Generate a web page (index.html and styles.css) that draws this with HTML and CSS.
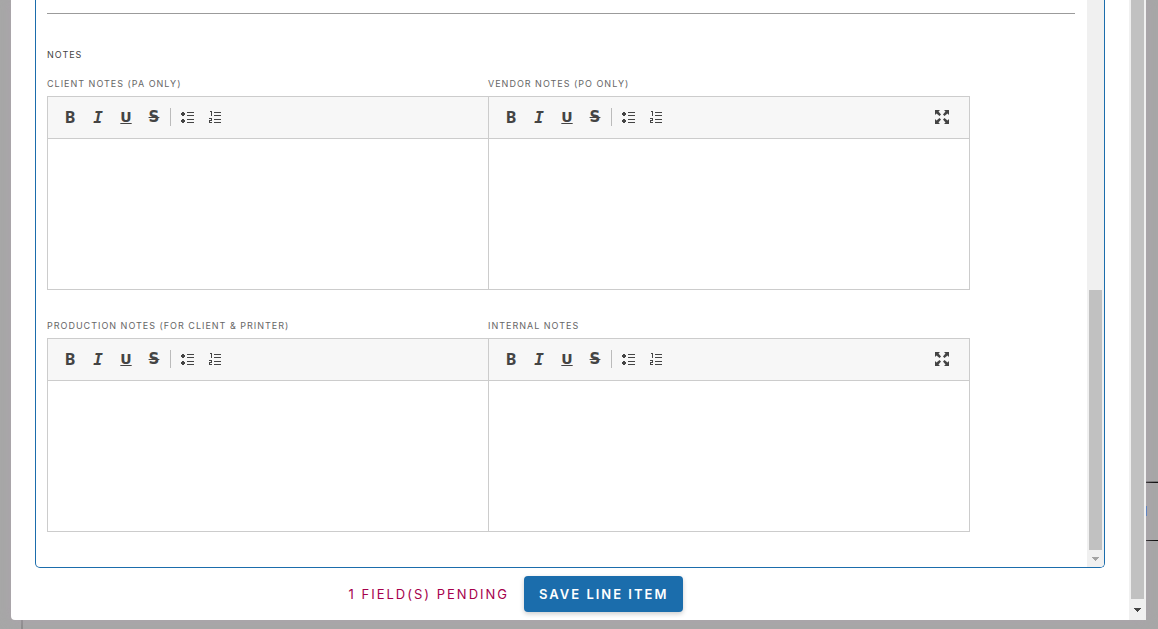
FILE: index.html
```html
<!DOCTYPE html>
<html lang="en">

<head>
    <meta charset="UTF-8">
    <title>Line Item</title>
    <link rel="stylesheet" href="styles.css">
</head>

<body>
    <div class="page-behind">
        <div class="behind-row"></div>
        <div class="behind-link"></div>
        <div class="behind-edge"></div>
    </div>

    <div class="modal">
        <div class="modal-main">
            <div class="panel">
                <form class="panel-content" id="line-item">
                    <hr class="divider">
                    <h2 class="section-title">Notes</h2>
                    <div class="notes-grid"></div>
                </form>
                <div class="scrollbar">
                    <div class="thumb panel-thumb"></div>
                    <div class="scroll-arrow light">
                        <svg width="7" height="4" viewBox="0 0 7 4" shape-rendering="crispEdges"><path d="M0 0h7v1H6v1H5v1H4v1H3V3H2V2H1V1H0z"/></svg>
                    </div>
                </div>
            </div>
            <div class="modal-footer">
                <span class="pending">1 Field(s) Pending</span>
                <button type="submit" form="line-item" class="save-button">Save Line Item</button>
            </div>
        </div>
        <div class="scrollbar">
            <div class="thumb"></div>
            <div class="scroll-arrow">
                <svg width="7" height="4" viewBox="0 0 7 4" shape-rendering="crispEdges"><path d="M0 0h7v1H6v1H5v1H4v1H3V3H2V2H1V1H0z"/></svg>
            </div>
        </div>
    </div>

    <script src="script.js"></script>
</body>

</html>
```

FILE: styles.css
```css
* {
    box-sizing: border-box;
}

body {
    font-family: Inter, "Liberation Sans", sans-serif;
    background-color: #a7a7a7;
    margin: 0;
    height: 100vh;
    padding: 0 12px 9px 11px;
    overflow: hidden;
}

/* dimmed page under the modal */
.page-behind {
    position: absolute;
    inset: 0;
}

.behind-row {
    position: absolute;
    right: 0;
    top: 482px;
    width: 40px;
    height: 59px;
    border-top: 1px solid #111;
    border-bottom: 1px solid #111;
    box-shadow: 0 -1px 0 #777;
}

.behind-link {
    position: absolute;
    right: 11px;
    top: 506px;
    width: 4px;
    height: 10px;
    background-color: #3f78c8;
}

.behind-edge {
    position: absolute;
    left: 21px;
    bottom: 0;
    width: 2px;
    height: 40px;
    background-color: #8c8c8c;
}

.modal {
    position: relative;
    display: flex;
    height: 100%;
    background-color: #fff;
    border-radius: 0 0 0 4px;
    box-shadow: 0 0 12px rgba(176, 160, 176, 0.6);
}

.modal-main {
    flex: 1;
    display: flex;
    flex-direction: column;
    padding: 0 24px 8px;
}

.panel {
    flex: 1;
    display: flex;
    border: 1px solid #1b6dac;
    border-top: none;
    border-radius: 0 0 5px 5px;
    overflow: hidden;
}

.panel-content {
    flex: 1;
    padding: 13px 12px 0 11px;
}

.divider {
    height: 1px;
    margin: 0 0 34px;
    border: none;
    background-color: #9b9b9b;
}

.section-title,
.note-label {
    margin: 0;
    font-size: 9px;
    line-height: 14px;
    font-weight: 400;
    letter-spacing: 1px;
    text-transform: uppercase;
    color: #666;
}

.section-title {
    color: #444;
    margin-bottom: 15px;
}

.notes-grid {
    display: grid;
    grid-template-columns: 441fr 482fr;
    row-gap: 29px;
    margin-right: 105px;
}

.note-label {
    display: block;
    margin-bottom: 5px;
}

.editor {
    border: 1px solid #ccc;
}

.note:nth-child(odd) .editor {
    border-right: none;
}

.toolbar {
    display: flex;
    align-items: center;
    height: 42px;
    padding: 0 13px 1px 8px;
    background-color: #f7f7f7;
    border-bottom: 1px solid #ccc;
}

.tool {
    display: flex;
    align-items: center;
    justify-content: center;
    width: 28px;
    height: 28px;
    padding: 0;
    border: none;
    background: none;
    font-family: "DejaVu Sans", sans-serif;
    font-size: 15px;
    font-weight: 700;
    color: #444;
    cursor: pointer;
}

.tool.bold {
    font-family: "Noto Sans", sans-serif;
    font-size: 16px;
}

.tool.italic {
    font-family: "DejaVu Sans Mono", monospace;
    font-size: 16px;
    font-style: italic;
}

.tool.underline {
    font-size: 14px;
    text-decoration: underline;
    text-decoration-thickness: 1px;
    text-underline-offset: 1px;
}

.tool.strike {
    text-decoration: line-through;
    text-decoration-thickness: 1px;
}

.tool.expand {
    margin-left: auto;
}

.separator {
    width: 1px;
    height: 18px;
    margin: 0 3px 0 2px;
    background-color: #bbb;
}

.note-text {
    display: block;
    width: 100%;
    height: 150px;
    padding: 10px;
    border: none;
    outline: none;
    resize: none;
    font: inherit;
    font-size: 14px;
}

.modal-footer {
    display: flex;
    align-items: center;
    justify-content: center;
    gap: 15px;
    padding-top: 8px;
    /* the pair sits left of the panel's middle */
    padding-right: 108px;
}

.pending {
    font-size: 13px;
    letter-spacing: 2px;
    text-transform: uppercase;
    color: #a6004c;
}

.save-button {
    height: 36px;
    padding: 0 15px;
    border: none;
    border-radius: 4px;
    background-color: #1b6dac;
    box-shadow: 0 2px 5px rgba(0, 0, 0, 0.2);
    font-family: inherit;
    font-size: 13px;
    font-weight: 600;
    letter-spacing: 2px;
    text-transform: uppercase;
    color: #fff;
    cursor: pointer;
}

.scrollbar {
    display: flex;
    flex-direction: column;
    width: 17px;
    padding: 0 2px;
    background-color: #f0f0f0;
}

.thumb {
    flex: 1;
    background-color: #c1c1c1;
}

.panel-thumb {
    margin-top: 290px;
}

.scroll-arrow {
    display: flex;
    justify-content: center;
    align-items: center;
    height: 21px;
    fill: #444;
}

.scroll-arrow.light {
    height: 17px;
    fill: #a3a3a3;
}
```

FILE: script.js
```js
var notes = [
    { id: "client", label: "Client Notes (PA Only)" },
    { id: "vendor", label: "Vendor Notes (PO Only)", expand: true },
    { id: "production", label: "Production Notes (For Client &amp; Printer)" },
    { id: "internal", label: "Internal Notes", expand: true }
];

var bulletIcon = `
    <svg width="14" height="12" viewBox="0 0 14 12" fill="#444" shape-rendering="crispEdges">
        <path d="M1 1h2v1h1v2H3v1H1V4H0V2h1zM1 8h2v1h1v2H3v1H1v-1H0V9h1zM6 1h7v1H6zM6 4h7v1H6zM6 8h7v1H6zM6 11h7v1H6z"/>
    </svg>`;

var numberIcon = `
    <svg width="14" height="12" viewBox="0 0 14 12" fill="#444" shape-rendering="crispEdges">
        <path d="M1 0h2v5H2V1H1zM0 7h3v3H1v1h2v1H0V9h2V8H0zM5 1h7v1H5zM5 4h7v1H5zM5 8h7v1H5zM5 11h7v1H5z"/>
    </svg>`;

var expandIcon = `
    <svg width="14" height="14" viewBox="0 0 14 14" fill="#444">
        <path d="M0 0h5L3.500 1.500 6 4.500 4.500 6 1.500 3.500 0 5zM14 0v5l-1.500-1.500L9.500 6 8 4.500l2.500-3L9 0zM0 14V9l1.500 1.500L4.500 8 6 9.500l-2.500 3L5 14zM14 14H9l1.500-1.500L8 9.500 9.500 8l3 2.500L14 9z"/>
    </svg>`;

document.querySelector(".notes-grid").innerHTML = notes.map(function (note) {
    return `
        <div class="note">
            <label class="note-label" for="${note.id}">${note.label}</label>
            <div class="editor">
                <div class="toolbar">
                    <button type="button" class="tool bold">B</button>
                    <button type="button" class="tool italic">I</button>
                    <button type="button" class="tool underline">U</button>
                    <button type="button" class="tool strike">S</button>
                    <span class="separator"></span>
                    <button type="button" class="tool" aria-label="Bulleted list">${bulletIcon}</button>
                    <button type="button" class="tool" aria-label="Numbered list">${numberIcon}</button>
                    ${note.expand ? `<button type="button" class="tool expand" aria-label="Expand">${expandIcon}</button>` : ""}
                </div>
                <textarea class="note-text" id="${note.id}"></textarea>
            </div>
        </div>
    `;
}).join("");
```
